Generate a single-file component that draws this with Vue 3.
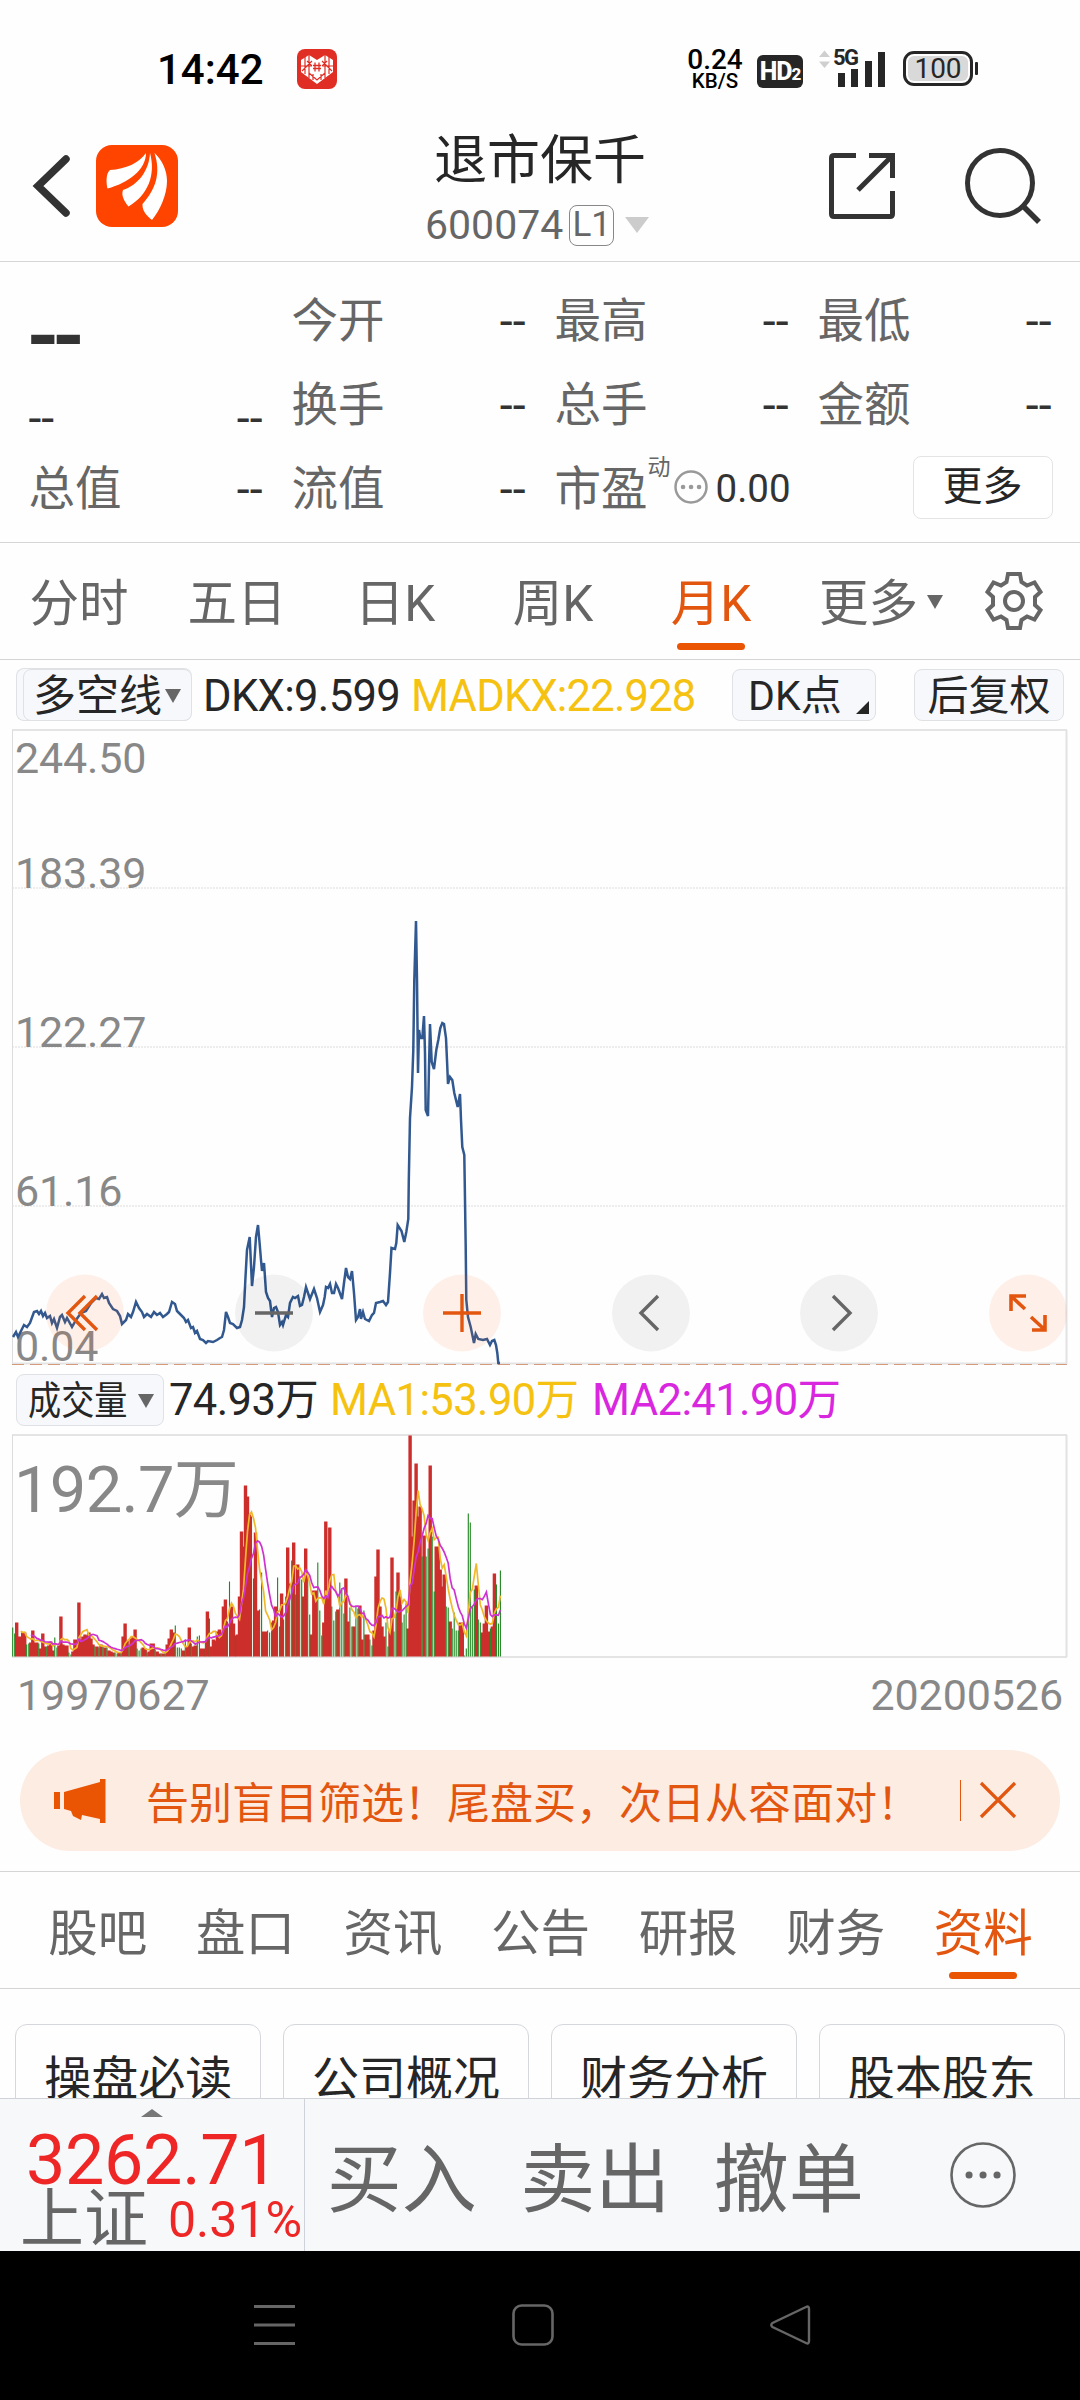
<template>
  <div class="page">
    <div class="status-bar">
      <span class="clock">14:42</span>
      <svg class="app-badge" viewBox="0 0 40 40">
        <rect width="40" height="40" rx="8" fill="#e02e24" />
        <path d="M12 6 L20 11 L28 6 L36 11 V23 L20 35 L4 23 V11z" fill="#fff" />
        <path
          d="M4 17H15M25 17H36M8 8V25M12 6V29M28 6V29M32 8V25M5 22L15 12M35 22L25 12M10 12L15 17M30 12L25 17M12 24L20 31L28 24M16 25V31M24 25V31"
          stroke="#e02e24" stroke-width="1.2" fill="none"
        />
        <rect x="15.500" y="13" width="9" height="10" fill="#fff" />
        <path d="M18 13.500V22.500M22 13.500V22.500M16 16.500H24M16 19.500H24" stroke="#e02e24" stroke-width="1.3" />
      </svg>
      <div class="net-speed">
        <span class="speed-num">0.24</span>
        <span class="speed-unit">KB/S</span>
      </div>
      <div class="hd">HD<small>2</small></div>
      <div class="signal">
        <svg viewBox="0 0 70 40">
          <path d="M1 8L6.500 1.500L12 8zM1 12.500L6.500 19L12 12.500z" fill="#cfcfcf" />
          <path d="M20 24h7v14h-7zM33 20h7v18h-7zM47 12h7v26h-7zM60 3h7v35h-7z" fill="#262626" />
        </svg>
        <span>5G</span>
      </div>
      <div class="battery"><span>100</span></div>
    </div>

    <header class="header">
      <svg class="back" viewBox="0 0 40 64">
        <path d="M34 5L6 32L34 59" fill="none" stroke="#333" stroke-width="7.500" stroke-linecap="round" />
      </svg>
      <svg class="logo" viewBox="0 0 82 82">
        <rect width="82" height="82" rx="16" fill="#ff4400" />
        <path d="M14 25C30 24 43 18 50 8C50 25 32 38 11.500 43.500C10 37 10 28 14 25z" fill="#fff" />
        <path d="M54 8C60 30 52 50 32.500 61.500C28 56 25 50 27 45C42 40 53 26 54 8z" fill="#fff" />
        <path d="M58.500 8C66 15 71 25 71 36C71 50 64 65 56 75C51 71 46 66 46.500 59C60 44 65 28 58.500 8z" fill="#fff" />
      </svg>
      <div class="title">
        <h1>退市保千</h1>
        <div class="code">
          <span>600074</span>
          <span class="level">L1</span>
          <i class="tri tri-title"></i>
        </div>
      </div>
      <svg class="share" viewBox="0 0 66 66">
        <path d="M27 2.500H5Q2.500 2.500 2.500 5V61Q2.500 63.500 5 63.500H61Q63.500 63.500 63.500 61V38" fill="none" stroke="#333" stroke-width="5" />
        <path d="M40 2.500H63.500V25M63 3L29 37" fill="none" stroke="#333" stroke-width="5" />
      </svg>
      <svg class="search" viewBox="0 0 78 80">
        <circle cx="35" cy="36" r="32.500" fill="none" stroke="#333" stroke-width="5" />
        <path d="M58 59L74 75" stroke="#333" stroke-width="5.500" />
      </svg>
    </header>

    <section class="quote">
      <div class="cell big"><b>--</b></div>
      <div v-for="c in row1" :key="c" class="cell"><span>{{ c }}</span><em>--</em></div>
      <div class="cell low"><em>--</em><em>--</em></div>
      <div v-for="c in row2" :key="c" class="cell"><span>{{ c }}</span><em>--</em></div>
      <div v-for="c in row3" :key="c" class="cell"><span>{{ c }}</span><em>--</em></div>
      <div class="cell pe">
        <span>市盈</span>
        <sup>动</sup>
        <svg viewBox="0 0 34 34">
          <circle cx="17" cy="17" r="15.500" fill="none" stroke="#999" stroke-width="2.500" />
          <path d="M9 17h.1M17 17h.1M25 17h.1" stroke="#999" stroke-width="4.500" stroke-linecap="round" />
        </svg>
        <em>0.00</em>
      </div>
      <div class="cell last"><button class="more">更多</button></div>
    </section>

    <nav class="periods">
      <span v-for="p in periods" :key="p" :class="{ active: p === '月K' }">{{ p }}</span>
      <span class="more-tab">更多<i class="tri"></i></span>
      <svg class="gear" viewBox="-30 -30 60 60">
        <path
          d="M-6 -27H6L7.500 -19L13 -15.500L20.500 -18.500L26.500 -9L21 -4V4L26.500 9L20.500 18.500L13 15.500L7.500 19L6 27H-6L-7.500 19L-13 15.500L-20.500 18.500L-26.500 9L-21 4V-4L-26.500 -9L-20.500 -18.500L-13 -15.500L-7.500 -19z"
          fill="none" stroke="#666" stroke-width="4"
        />
        <circle r="9" fill="none" stroke="#666" stroke-width="4" />
      </svg>
    </nav>

    <div class="indicator">
      <div class="pill-back">
        <div class="pill kind">多空线<i class="tri"></i></div>
      </div>
      <span class="dkx">DKX:9.599</span>
      <span class="madkx">MADKX:22.928</span>
      <div class="pill dk">DK点<i class="corner"></i></div>
      <div class="pill fq">后复权</div>
    </div>

    <div class="chart">
      <svg viewBox="0 729 1080 638">
        <path d="M12 888H1066M12 1047H1066M12 1206H1066" stroke="#ededed" stroke-width="2" stroke-dasharray="2 1" />
        <path d="M12 730H1067" stroke="#e4e4e4" stroke-width="2" />
        <path d="M12.500 730V1364" stroke="#dcdcdc" stroke-width="1" />
        <path d="M1066.500 730V1364" stroke="#e2e2e2" stroke-width="2" />
        <path d="M12 1363.500H1067" stroke="#e4e4e4" stroke-width="2" />
        <path d="M12 1364.500H1067" stroke="#d49a7c" stroke-width="1" stroke-dasharray="12 6" />
        <g class="axis">
          <text x="15" y="773">244.50</text>
          <text x="15" y="888">183.39</text>
          <text x="15" y="1047">122.27</text>
          <text x="15" y="1206">61.16</text>
          <text x="15" y="1361">0.04</text>
        </g>
        <polyline :points="priceLine" fill="none" stroke="#31588f" stroke-width="2.500" />
        <g v-for="b in tools" :key="b.x" :transform="`translate(${b.x} 1313)`">
          <ellipse rx="39" ry="38.500" :fill="b.hot ? 'rgba(255,98,20,.09)' : 'rgba(0,0,0,.05)'" />
          <path :d="b.d" fill="none" :stroke="b.hot ? '#e3560f' : '#666'" :stroke-width="b.w || 3.4" />
        </g>
      </svg>
    </div>

    <div class="volume-head">
      <div class="pill vol"><span>成交量</span><i class="tri"></i></div>
      <span class="v0">74.93万</span>
      <span class="v1">MA1:53.90万</span>
      <span class="v2">MA2:41.90万</span>
    </div>

    <div class="volume">
      <svg viewBox="0 1434 1080 225">
        <path d="M12 1435H1067M12 1657H1067" stroke="#e4e4e4" stroke-width="2" />
        <path d="M12.500 1435V1657" stroke="#dcdcdc" stroke-width="1" />
        <path d="M1066.500 1435V1657" stroke="#e2e2e2" stroke-width="2" />
        <text x="14" y="1512" class="vol-max">192.7万</text>
        <path :d="redBars" stroke="#cc2e2b" stroke-width="3.400" />
        <path :d="greenBars" stroke="#1f851f" stroke-width="1.100" />
        <polyline :points="average(5)" fill="none" stroke="#f0b92a" stroke-width="1.700" />
        <polyline :points="average(10)" fill="none" stroke="#cf32cf" stroke-width="1.700" />
      </svg>
    </div>

    <div class="dates"><span>19970627</span><span>20200526</span></div>

    <div class="banner">
      <svg class="horn" viewBox="0 0 52 44">
        <path d="M0 13h6v17H0zM10 13L46 3V0h5.500V44H46v-4L28 36L27 41L19 37L17 32L10 30z" fill="#ea5504" />
      </svg>
      <span class="banner-text">告别盲目筛选！尾盘买，次日从容面对！</span>
      <i class="bar"></i>
      <svg class="close" viewBox="0 0 38 38">
        <path d="M2 2L36 36M36 2L2 36" stroke="#e3560f" stroke-width="3.200" />
      </svg>
    </div>

    <nav class="sections">
      <span v-for="s in sections" :key="s" :class="{ active: s === '资料' }">{{ s }}</span>
    </nav>

    <div class="cards">
      <div v-for="c in cards" :key="c" class="card">{{ c }}</div>
    </div>

    <footer class="trade">
      <div class="index">
        <i class="up"></i>
        <div class="index-value">3262.71</div>
        <div class="index-row"><span>上证</span><em>0.31%</em></div>
      </div>
      <div class="action">买入</div>
      <div class="action">卖出</div>
      <div class="action">撤单</div>
      <svg class="dots" viewBox="0 0 68 68">
        <circle cx="34" cy="34" r="31.500" fill="none" stroke="#666" stroke-width="2.600" />
        <path d="M20 34h.1M34 34h.1M48 34h.1" stroke="#666" stroke-width="7" stroke-linecap="round" />
      </svg>
    </footer>

    <div class="system-nav">
      <svg viewBox="0 0 42 42"><path d="M0 2.500H41M0 21H41M0 39.500H41" stroke="#666" stroke-width="3" /></svg>
      <svg viewBox="0 0 42 42"><rect x="1.500" y="1.500" width="39" height="39" rx="8" fill="none" stroke="#666" stroke-width="2.600" /></svg>
      <svg viewBox="0 0 42 42"><path d="M36 3Q39 1.500 39 5V37Q39 40.500 36 39L2.500 23Q0 21 2.500 19z" fill="none" stroke="#666" stroke-width="2.400" /></svg>
    </div>
  </div>
</template>

<script setup>
const row1 = ['今开', '最高', '最低']
const row2 = ['换手', '总手', '金额']
const row3 = ['总值', '流值']
const periods = ['分时', '五日', '日K', '周K', '月K']
const sections = ['股吧', '盘口', '资讯', '公告', '研报', '财务', '资料']
const cards = ['操盘必读', '公司概况', '财务分析', '股本股东']

const tools = [
  { x: 85, hot: true, d: 'M0 -17L-17 0L0 17M12 -17L-5 0L12 17' },
  { x: 274, hot: false, d: 'M-19 0H19' },
  { x: 462, hot: true, d: 'M-19 0H19M0 -19V19' },
  { x: 651, hot: false, d: 'M7 -17L-10 0L7 17' },
  { x: 839, hot: false, d: 'M-6 -17L11 0L-6 17' },
  { x: 1028, hot: true, w: 3.6, d: 'M-17 -2V-17H-2M-16 -16L-3 -4M4 17H17V2M16 16L3 4' }
]

const priceLine =
  '13,1337 16,1332 18,1337 21,1331 24,1325 27,1327 30,1323 34,1312 37,1311 39,1314 41,1311 43,1316 45,1313 47,1318 50,1316 52,1323 54,1319 57,1328 60,1317 62,1315 65,1322 67,1318 72,1327 76,1320 81,1313 86,1311 91,1303 96,1298 99,1299 102,1294 104,1298 107,1297 109,1303 113,1309 117,1311 120,1316 122,1324 126,1320 128,1314 131,1317 133,1312 136,1302 139,1308 142,1312 144,1317 147,1314 151,1317 154,1312 157,1315 160,1313 163,1317 167,1314 169,1312 172,1302 175,1304 177,1311 181,1315 184,1318 186,1322 188,1320 191,1328 193,1327 195,1333 197,1331 200,1339 203,1340 206,1343 208,1341 213,1342 217,1340 220,1338 222,1337 224,1330 226,1312 228,1317 230,1323 233,1324 237,1328 240,1327 242,1320 244,1307 245.5,1277 247,1250 249.7,1237 252,1286 254,1267 256,1237 258,1225 259.6,1243 261,1260 262,1271 264,1263 266,1292 268,1298 270,1301 272,1317 274,1308 276,1307 278,1312 280,1325 282,1322 283,1325 286,1315 288,1317 290,1303 293,1297 295,1298 298,1296 300,1306 302,1305 304,1297 306,1287 308,1293 310,1299 314,1289 317,1298 320,1312 323,1305 324.700,1297 326,1287 328,1288 330,1284 332,1293 334,1293 336,1284 338,1288 342,1299 344,1283 346,1268 348,1277 350,1279 352,1271 354,1293 356,1320 358,1317 360,1309 361,1319 363,1312 365,1319 369,1321 372,1315 374,1313 376,1303 380,1302 383,1301 386,1305 388,1302 390,1273 391.500,1248 395,1249 396.300,1243 397.700,1225 401.500,1231 404.300,1242 406.300,1232 408.300,1219 408.800,1180 410,1118 412,1087 413.300,1050 414.300,980 416,921 417,980 418,1073 419,1030 420.300,1038 422.300,1038 424,1016 425,1053 425.700,1110 428,1116 429,1067 430,1024 431.700,1062 434,1069 436.300,1050 438.300,1040 440.300,1028 442.300,1023 444,1024 446,1038 447.300,1067 448,1084 450,1077 452.300,1080 454.300,1093 457.700,1107 460,1094 461,1120 462.300,1147 464.300,1155 464.700,1180 465.700,1247 466.300,1300 468,1317 470.700,1327 474,1343 475.700,1334 478.300,1339 483,1340 487,1339 490,1345 492,1341 494.300,1340 496,1345 497.300,1353 498.300,1363 500,1363'

// monthly volume, negative = falling month
const volumes = [
  -29, -23, 34, 20, 20, 24, 24, -12, -13, 14, 26, 14, 14, -13, 8, 23, 10, -10, 11, 15,
  6, -19, -9, 11, 40, 12, 11, 11, -4, -2, 5, 17, 17, 54, 17, 20, 22, 21, 24, 18,
  12, -10, 10, -9, 12, -11, 9, -9, 6, 5, 4, -4, -3, 4, -4, 20, 33, 16, -12, 18,
  20, 27, -8, -6, -8, 9, 8, -4, 5, 13, 13, -7, 5, 3, -3, 3, -4, 12, 18, 27,
  24, -31, -9, -9, -8, 6, -17, 10, 29, -13, 10, 11, -20, -21, 8, 8, -16, 45, -38, 10,
  17, 16, 25, 27, 20, 50, 57, -35, -75, 50, 33, -21, 22, 60, 125, 110, 171, 160, 142, -140,
  -78, 124, 46, -47, -84, 25, 25, -26, -24, -34, 36, 50, -79, -30, 63, -37, -60, 109, -73, -96,
  114, -62, 92, -80, -77, 60, 108, -80, -42, 22, 66, 66, -94, -46, -21, 34, 135, 60, 129, -50,
  -36, -45, 47, -74, -67, -43, 78, 35, -49, -30, 30, -50, -48, 51, 17, -46, 22, 22, -17, -11,
  26, 80, 107, 50, 30, 20, -34, -10, 26, 99, -25, -65, 84, 60, -34, -42, -53, 28, 221, 120,
  156, 193, 140, 150, -100, 121, -100, -108, 191, -120, -65, 110, 110, 87, 70, 82, -50, -49, 35, -28,
  -44, -26, -26, 34, 34, -1, -8, -143, -134, -50, -67, 71, -37, -34, 24, 33, 51, 25, -28, 30,
  83, -72, -33, -86
]

const step = 2.007
const base = 1656.5
const xOf = i => (12.7 + i * step).toFixed(1)

function bars(rising) {
  return volumes
    .map((v, i) => (v > 0 === rising ? `M${xOf(i)} ${base}V${base - Math.abs(v)}` : ''))
    .join('')
}

const redBars = bars(true)
const greenBars = bars(false)

function average(n) {
  const points = []
  for (let i = n - 1; i < volumes.length; i++) {
    const sum = volumes.slice(i - n + 1, i + 1).reduce((a, v) => a + Math.abs(v), 0)
    points.push(`${xOf(i)},${(base - sum / n).toFixed(1)}`)
  }
  return points.join(' ')
}
</script>

<style>
body {
  background: #fff;
}
</style>

<style scoped>
.page {
  width: 1080px;
  height: 2400px;
  overflow: hidden;
  display: flex;
  flex-direction: column;
  background: #fefefe;
  color: #262626;
  font-family: Roboto, "Noto Sans CJK SC", sans-serif;
}

.page > * {
  flex: none;
  box-sizing: border-box;
}

svg {
  display: block;
  flex: none;
}

em,
i {
  font-style: normal;
}

.tri {
  width: 0;
  height: 0;
  border-left: 8.5px solid transparent;
  border-right: 8.5px solid transparent;
  border-top: 14px solid #666;
}

.status-bar {
  height: 111px;
  display: flex;
  align-items: flex-start;
  padding: 49px 0 0 157px;
}

.clock {
  width: 140px;
  font-size: 42px;
  line-height: 41px;
  font-weight: 500;
  color: #000;
}

.app-badge {
  width: 40px;
  height: 40px;
}

.net-speed {
  width: 60px;
  margin-left: 348px;
  display: flex;
  flex-direction: column;
  align-items: center;
  font-weight: 500;
  color: #000;
}

.speed-num {
  font-size: 28px;
  line-height: 22px;
}

.speed-unit {
  font-size: 20.5px;
  line-height: 20px;
}

.hd {
  width: 46px;
  height: 33px;
  margin: 6px 0 0 12px;
  border-radius: 6px;
  background: #262626;
  color: #fff;
  text-align: center;
  font-size: 25px;
  line-height: 33px;
  font-weight: 800;
  letter-spacing: -1px;
}

.hd small {
  font-size: 17px;
}

.signal {
  position: relative;
  width: 70px;
  margin-left: 15px;
}

.signal svg {
  width: 70px;
  height: 40px;
}

.signal span {
  position: absolute;
  left: 15px;
  top: -1px;
  font-size: 22px;
  line-height: 20px;
  font-weight: 700;
  letter-spacing: -1.5px;
}

.battery {
  position: relative;
  width: 70px;
  height: 35px;
  margin: 2px 0 0 15px;
  box-sizing: border-box;
  border: 3px solid #262626;
  border-radius: 11px;
  padding: 2px;
}

.battery span {
  display: block;
  height: 25px;
  border-radius: 6px;
  background: #d9d9d9;
  text-align: center;
  font-size: 28px;
  line-height: 26px;
}

.battery::after {
  content: "";
  position: absolute;
  right: -8px;
  top: 8px;
  width: 3px;
  height: 13px;
  background: #262626;
  border-radius: 1px;
}

.header {
  height: 151px;
  display: flex;
  align-items: flex-start;
  border-bottom: 1px solid #d5d5d5;
}

.back {
  width: 40px;
  height: 64px;
  margin: 43px 0 0 32px;
}

.logo {
  width: 82px;
  height: 82px;
  margin: 34px 0 0 24px;
}

.title {
  width: 651px;
}

h1 {
  margin: 22px 0 0 256px;
  font-size: 53px;
  line-height: 56px;
  font-weight: 400;
  white-space: nowrap;
}

.code {
  display: flex;
  align-items: center;
  height: 42px;
  margin: 15px 0 0 247px;
  font-size: 41px;
  line-height: 42px;
  color: #666;
}

.level {
  margin-left: 6px;
  width: 43px;
  height: 39px;
  border: 1px solid #888;
  border-radius: 8px;
  font-size: 35px;
  line-height: 38px;
  text-align: center;
}

.tri-title {
  margin-left: 11px;
  border-left-width: 12.5px;
  border-right-width: 12.5px;
  border-top: 16px solid #ccc;
}

.share {
  width: 66px;
  height: 66px;
  margin: 42px 0 0;
}

.search {
  width: 78px;
  height: 80px;
  margin: 36px 0 0 70px;
}

.quote {
  height: 281px;
  display: grid;
  grid-template-columns: repeat(4, 234px);
  grid-template-rows: repeat(3, 84px);
  column-gap: 29px;
  padding: 17px 0 0 28.5px;
  border-bottom: 1px solid #d5d5d5;
}

.cell {
  display: flex;
  align-items: center;
  justify-content: space-between;
  font-size: 46.5px;
  line-height: 84px;
  color: #666;
  white-space: nowrap;
}

.cell em {
  color: #333;
}

.cell.big b {
  margin-left: -2px;
  font-size: 84px;
  letter-spacing: -7.5px;
  color: #333;
  transform: translateY(16px);
}

.cell.low {
  padding-top: 26px;
}

.cell.pe {
  justify-content: flex-start;
}

.pe sup {
  align-self: flex-start;
  font-size: 23px;
  line-height: 42px;
}

.pe svg {
  width: 34px;
  height: 34px;
  margin: -5px 0 0 3px;
}

.pe em {
  margin-left: 8px;
  font-size: 38.5px;
}

.cell.last {
  justify-content: flex-end;
}

.more {
  width: 140px;
  height: 63px;
  margin: -4px -1px 0 0;
  padding: 0;
  border: 1.5px solid #e4e4e4;
  border-radius: 8px;
  background: #fff;
  font-family: inherit;
  font-size: 40px;
  line-height: 58px;
  color: #262626;
}

.periods {
  height: 117px;
  display: flex;
  border-bottom: 1px solid #d5d5d5;
  font-size: 49.5px;
  line-height: 122px;
  color: #666;
}

.periods span {
  position: relative;
  width: 158px;
  text-align: center;
  white-space: nowrap;
}

.active {
  color: #e3560f !important;
}

.active::after {
  content: "";
  position: absolute;
  left: 50%;
  bottom: 9px;
  width: 68px;
  height: 7px;
  margin-left: -34px;
  border-radius: 4px;
  background: #ea5504;
}

.periods .more-tab {
  display: flex;
  width: 125px;
  margin-left: 29px;
  gap: 9px;
}

.more-tab .tri {
  margin-top: 52px;
}

.gear {
  width: 60px;
  height: 60px;
  margin: 28px 0 0 40px;
}

.indicator {
  height: 69px;
  display: flex;
  align-items: flex-start;
  padding: 8px 0 0 16px;
  font-size: 43.5px;
  line-height: 57px;
  white-space: nowrap;
}

.pill {
  display: flex;
  align-items: center;
  box-sizing: border-box;
  height: 52px;
  border: 1.5px solid #dfe1e5;
  border-radius: 8px;
  background: #f6f8fb;
  line-height: 50px;
}

.pill-back {
  box-sizing: border-box;
  height: 53px;
  padding-left: 6px;
  border: 1px solid #dfe1e5;
  border-right: 0;
  border-radius: 8px;
  background: #f6f8fb;
}

.kind {
  width: 169px;
  padding: 2px 0 0 9px;
  font-size: 43px;
  gap: 3px;
}

.dkx {
  width: 208px;
  margin-left: 11px;
  letter-spacing: -0.65px;
}

.madkx {
  width: 321px;
  color: #f5c211;
  letter-spacing: -0.8px;
}

.dk {
  position: relative;
  width: 144px;
  margin: 1px 0 0;
  padding: 2px 0 0 15px;
  font-size: 41px;
}

.corner {
  position: absolute;
  right: 6px;
  bottom: 6px;
  border-left: 13px solid transparent;
  border-bottom: 13px solid #262626;
}

.fq {
  width: 150px;
  margin: 1px 0 0 38px;
  padding-top: 2px;
  justify-content: center;
  font-size: 41px;
}

.chart {
  height: 638px;
}

.axis {
  font-size: 43px;
  letter-spacing: -0.15px;
  fill: #888;
}

.volume-head {
  height: 67px;
  display: flex;
  align-items: flex-start;
  padding: 7px 0 0 16px;
  font-size: 43.5px;
  line-height: 54px;
  letter-spacing: -0.6px;
  white-space: nowrap;
}

.vol {
  width: 148px;
  padding: 2px 0 0 11px;
  font-size: 39px;
  letter-spacing: 0;
}

.vol span {
  width: 110px;
  transform: scaleX(0.85);
  transform-origin: left;
}

.v0 {
  width: 161px;
  margin-left: 5px;
}

.v1 {
  width: 262px;
  color: #f5c211;
}

.v2 {
  color: #d926df;
}

.volume {
  height: 225px;
}

.vol-max {
  font-size: 65px;
  letter-spacing: -0.7px;
  fill: #888;
}

.dates {
  height: 91px;
  display: flex;
  justify-content: space-between;
  padding: 10px 17px 0;
  font-size: 43px;
  line-height: 52px;
  letter-spacing: -0.1px;
  color: #888;
}

.banner {
  height: 101px;
  margin: 0 20px 20px;
  display: flex;
  align-items: center;
  border-radius: 51px;
  background: #fdece2;
  color: #e3560f;
}

.horn {
  width: 52px;
  height: 44px;
  margin-left: 34px;
}

.banner-text {
  width: 794px;
  margin-left: 40px;
  padding-top: 6px;
  font-size: 43px;
  line-height: 60px;
  white-space: nowrap;
}

.bar {
  width: 1px;
  height: 41px;
  margin-left: 20px;
  background: #e3560f;
}

.close {
  width: 38px;
  height: 38px;
  margin: -2px 0 0 18px;
}

.sections {
  height: 118px;
  display: flex;
  padding-left: 24px;
  border-top: 1px solid #d5d5d5;
  border-bottom: 1px solid #d5d5d5;
  font-size: 49.5px;
  line-height: 125px;
  color: #666;
}

.sections span {
  position: relative;
  width: 147.6px;
  text-align: center;
}

.cards {
  height: 109px;
  display: flex;
  gap: 21.5px;
  padding: 35px 15px 0;
  overflow: hidden;
}

.card {
  box-sizing: border-box;
  width: 246.4px;
  height: 110px;
  border: 1.5px solid #d5d7dc;
  border-radius: 12px;
  text-align: center;
  font-size: 47px;
  line-height: 108px;
  white-space: nowrap;
}

.trade {
  height: 153px;
  display: flex;
  align-items: center;
  border-top: 1px solid #cfd2d8;
  background: #f6f8fa;
  color: #666;
}

.index {
  width: 305px;
  height: 152px;
  box-sizing: border-box;
  border-right: 1px solid #cfd2d8;
  display: flex;
  flex-direction: column;
}

.up {
  align-self: center;
  margin-top: 10px;
  border-left: 11.5px solid transparent;
  border-right: 11.5px solid transparent;
  border-bottom: 8px solid #777;
}

.index-value {
  height: 68px;
  margin: 8px 0 0 26px;
  font-size: 70px;
  line-height: 70px;
  letter-spacing: -0.3px;
  color: #ee2626;
}

.index-row {
  display: flex;
  padding-left: 20px;
  font-size: 64px;
  line-height: 54px;
  white-space: nowrap;
}

.index-row em {
  margin-left: 20px;
  font-size: 50px;
  color: #ee2626;
}

.action {
  width: 193.5px;
  text-align: center;
  font-size: 75px;
  line-height: 150px;
  padding-top: 9px;
  white-space: nowrap;
}

.dots {
  width: 68px;
  height: 68px;
  margin-left: 63.5px;
}

.system-nav {
  height: 149px;
  display: flex;
  gap: 216px;
  padding: 53px 0 0 254px;
  background: #000;
}

.system-nav svg {
  width: 42px;
  height: 42px;
}
</style>
